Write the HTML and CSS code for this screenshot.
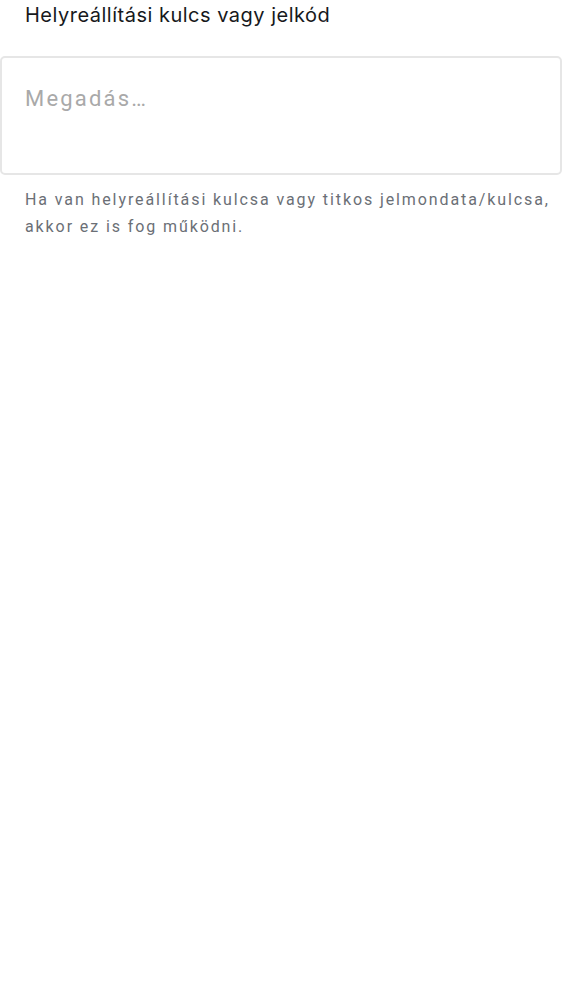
FILE: index.html
```html
<!DOCTYPE html>
<html lang="hu">
<head>
<meta charset="utf-8">
<link rel="stylesheet" href="styles.css">
</head>
<body>
<div class="field">
  <label class="label" for="key">Helyreállítási kulcs vagy jelkód</label>
  <textarea id="key" class="input" placeholder="Megadás…"></textarea>
  <p class="hint">Ha van helyreállítási kulcsa vagy titkos jelmondata/kulcsa, akkor ez is fog működni.</p>
</div>
</body>
</html>
```

FILE: styles.css
```css
html, body {
  margin: 0;
  padding: 0;
  background: #ffffff;
}
.field {
  display: flex;
  flex-direction: column;
}
.label {
  font-family: Inter, "Noto Sans", sans-serif;
  font-size: 20px;
  line-height: 30px;
  letter-spacing: 0.5px;
  color: #17191c;
  padding-left: 25px;
  margin-bottom: 26px;
}
.input {
  box-sizing: border-box;
  width: 562px;
  height: 119px;
  margin: 0;
  border: 2px solid #e6e6e6;
  border-radius: 5px;
  padding: 28px 23px;
  font-family: Roboto, sans-serif;
  font-size: 22px;
  line-height: 26px;
  letter-spacing: 2.2px;
  resize: none;
  outline: none;
}
.input::placeholder {
  color: #a9a9a9;
}
.hint {
  margin: 11px 0 0;
  padding: 0 8px 0 25px;
  font-family: Roboto, sans-serif;
  font-size: 16px;
  line-height: 27px;
  letter-spacing: 1.9px;
  color: #6b6f76;
}
```
